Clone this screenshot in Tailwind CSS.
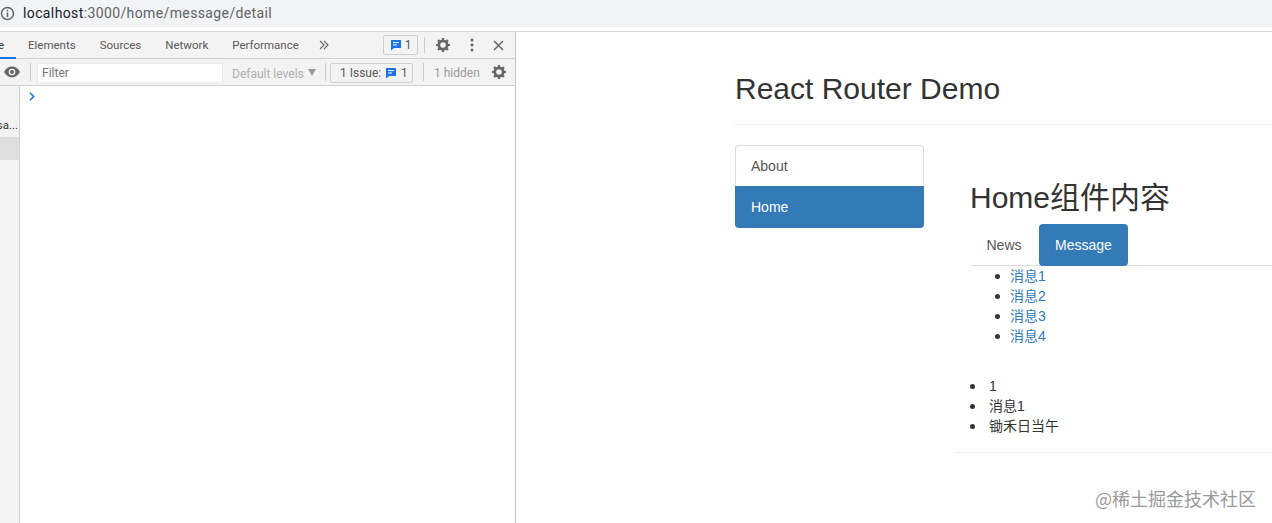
<!DOCTYPE html>
<html lang="en">
<head>
  <meta charset="UTF-8" />
  <title>React Router Demo</title>
  <script src="https://cdn.jsdelivr.net/npm/@tailwindcss/browser@4"></script>
</head>
<body class="bg-white overflow-hidden font-['Liberation_Sans','Noto_Sans_CJK_SC',sans-serif]">
<div class="relative w-[1272px] h-[523px] overflow-hidden flex flex-col">

  <!-- address bar -->
  <div class="h-[27px] shrink-0 bg-[#f1f3f4] flex items-center pl-[0px] gap-[8px] font-['Roboto','Noto_Sans',sans-serif]">
    <svg class="w-[15px] h-[15px]" viewBox="0 0 15 15" fill="none" stroke="#5f6368" stroke-width="1.5"><circle cx="7.500" cy="7.500" r="6"/><path d="M7.500 6.500v4.500M7.500 3.800v1.500"/></svg>
    <span class="text-[14px] tracking-[0.38px] text-[#5f6368]"><span class="text-[#202124]">localhost</span>:3000/home/message/detail</span>
  </div>
  <div class="h-[5px] shrink-0 bg-white border-b border-[#d4d6d9]"></div>

  <div class="flex flex-1 min-h-0">
    <!-- devtools -->
    <div class="w-[516px] shrink-0 border-r border-[#c4c6c9] flex flex-col font-['Roboto','Noto_Sans',sans-serif] text-[11.5px] text-[#5a5a5a]">
      <div class="h-[27px] shrink-0 bg-[#f3f3f3] border-b border-[#d0d0d0] flex items-center relative">
        <div class="absolute left-0 bottom-[-1px] w-[16px] h-[2px] bg-[#1a73e8]"></div>
        <div class="w-[28px] shrink-0 flex pl-[4px] pt-[1px]"><span class="flex justify-end w-0 text-[#333]">e</span></div>
        <div class="flex items-center gap-[24px] pt-[1px]">
          <span>Elements</span><span>Sources</span><span>Network</span><span>Performance</span>
        </div>
        <svg class="ml-[20px] w-[10px] h-[10px]" viewBox="0 0 10 10" fill="none" stroke="#666" stroke-width="1.1"><path d="M1 1l4 4-4 4M5 1l4 4-4 4"/></svg>
        <div class="ml-auto flex items-center pr-[11px]">
          <div class="w-[35px] h-[20px] border border-[#cfcfcf] rounded-[2px] flex items-center justify-center gap-[3px] text-[12px]">
            <svg class="w-[12px] h-[12px]" viewBox="0 0 12 12"><path d="M1 1h10v8H4l-3 2.600z" fill="#1a73e8"/><path d="M3 3.600h6M3 6h4" stroke="#fff" stroke-width="1"/></svg>
            <span>1</span>
          </div>
          <div class="ml-[6px] w-px h-[16px] bg-[#ccc]"></div>
          <svg class="ml-[10px] w-[16px] h-[16px]" viewBox="0 0 16 16"><circle cx="8" cy="8" r="4.200" fill="none" stroke="#666" stroke-width="2.800"/><path d="M8 1v2.400M8 12.600V15M1 8h2.400M12.600 8H15M3 3l1.800 1.800M11.200 11.200L13 13M13 3l-1.800 1.800M4.800 11.200L3 13" stroke="#666" stroke-width="2.200"/></svg>
          <svg class="ml-[19px] w-[4px] h-[14px]" viewBox="0 0 4 14" fill="#666"><circle cx="2" cy="2" r="1.500"/><circle cx="2" cy="7" r="1.500"/><circle cx="2" cy="12" r="1.500"/></svg>
          <svg class="ml-[19px] w-[11px] h-[11px]" viewBox="0 0 11 11" fill="none" stroke="#666" stroke-width="1.500"><path d="M1 1l9 9M10 1l-9 9"/></svg>
        </div>
      </div>
      <div class="h-[27px] shrink-0 bg-[#f3f3f3] border-b border-[#d0d0d0] flex items-center text-[12px]">
        <svg class="ml-[4px] w-[16px] h-[12px]" viewBox="0 0 16 12"><path d="M0 6c2-3.600 5-5.400 8-5.400S14 2.400 16 6c-2 3.600-5 5.400-8 5.400S2 9.600 0 6z" fill="#666"/><circle cx="8" cy="6" r="3.300" fill="#f3f3f3"/><circle cx="8" cy="6" r="2" fill="#666"/></svg>
        <div class="ml-[10px] w-px h-[18px] bg-[#ccc]"></div>
        <div class="ml-[6px] w-[186px] h-[20px] mt-[1px] pt-[1px] bg-white border border-[#ebebeb] flex items-center pl-[4px] text-[#757575]">Filter</div>
        <span class="ml-[9px] w-[72px] pt-[3px] text-[#b0b0b0] whitespace-nowrap">Default levels</span>
        <svg class="ml-[4px] w-[8px] h-[7px]" viewBox="0 0 8 7" fill="#9a9a9a"><path d="M0 0h8L4 7z"/></svg>
        <div class="ml-[9px] w-px h-[18px] bg-[#ccc]"></div>
        <div class="ml-[4px] w-[83px] h-[20px] mt-[1px] border border-[#cfcfcf] rounded-[2px] flex items-center pl-[9px] whitespace-nowrap">
          <span class="w-[45px] pt-[1px] overflow-hidden">1 Issue:</span>
          <svg class="w-[12px] h-[12px]" viewBox="0 0 12 12"><path d="M1 1h10v8H4l-3 2.600z" fill="#1a73e8"/><path d="M3 3.600h6M3 6h4" stroke="#fff" stroke-width="1"/></svg>
          <span class="ml-[4px] pt-[1px]">1</span>
        </div>
        <div class="ml-[10px] w-px h-[18px] bg-[#ccc]"></div>
        <span class="ml-[10px] w-[46px] pt-[2px] text-[#9a9a9a] whitespace-nowrap">1 hidden</span>
        <svg class="ml-[11px] w-[16px] h-[16px]" viewBox="0 0 16 16"><circle cx="8" cy="8" r="4.200" fill="none" stroke="#666" stroke-width="2.800"/><path d="M8 1v2.400M8 12.600V15M1 8h2.400M12.600 8H15M3 3l1.800 1.800M11.200 11.200L13 13M13 3l-1.800 1.800M4.800 11.200L3 13" stroke="#666" stroke-width="2.200"/></svg>
      </div>
      <div class="flex flex-1 min-h-0">
        <div class="w-[20px] shrink-0 bg-[#f3f3f3] border-r border-[#d0d0d0] overflow-hidden">
          <div class="mt-[31px] h-[18px] text-[#333] whitespace-nowrap flex justify-end pr-[1px]">sa...</div>
          <div class="mt-[2px] h-[23px] bg-[#dedede]"></div>
        </div>
        <div class="flex-1 bg-white pl-[9px] pt-[6px]">
          <svg class="w-[6px] h-[9px]" viewBox="0 0 6 9" fill="none" stroke="#1a73e8" stroke-width="1.600"><path d="M1 .8l3.600 3.700L1 8.200"/></svg>
        </div>
      </div>
    </div>

    <!-- page -->
    <div class="flex-1 min-w-0 pl-[219px] text-[14px] text-[#333]">
      <div class="h-[93px] border-b border-[#eee] pt-[40px]">
        <h2 class="text-[30px] leading-[33px] font-normal">React Router Demo</h2>
      </div>
      <div class="flex">
        <div class="w-[189px] shrink-0 mt-[20px] flex flex-col">
          <div class="h-[41px] pl-[15px] flex items-center text-[#555] bg-white border border-[#ddd] border-b-0 rounded-t-[4px]">About</div>
          <div class="h-[42px] pl-[16px] flex items-center text-white bg-[#337ab7] rounded-b-[4px]">Home</div>
        </div>
        <div class="flex-1 min-w-0 ml-[31px]">
          <div class="mt-[56px] h-[43px] pl-[15px]"><h2 class="text-[30px] leading-[33px] font-normal whitespace-nowrap">Home组件内容</h2></div>
          <div class="flex h-[42px] border-b border-[#ddd] ml-[16px]">
            <div class="w-[66px] mr-[2px] h-[41px] pt-[1px] flex items-center justify-center text-[#555]">News</div>
            <div class="w-[89px] h-[42px] shrink-0 rounded-[4px] bg-[#337ab7] text-white flex items-center justify-center">Message</div>
          </div>
          <ul class="pl-[40px] leading-[20px] text-[#337ab7]">
            <li class="flex items-center gap-[10px]"><i class="w-[5px] h-[5px] rounded-full bg-[#333]"></i>消息1</li>
            <li class="flex items-center gap-[10px]"><i class="w-[5px] h-[5px] rounded-full bg-[#333]"></i>消息2</li>
            <li class="flex items-center gap-[10px]"><i class="w-[5px] h-[5px] rounded-full bg-[#333]"></i>消息3</li>
            <li class="flex items-center gap-[10px]"><i class="w-[5px] h-[5px] rounded-full bg-[#333]"></i>消息4</li>
          </ul>
          <ul class="mt-[30px] pl-[15px] leading-[20px]">
            <li class="flex items-center gap-[14px]"><i class="w-[5px] h-[5px] rounded-full bg-[#333]"></i>1</li>
            <li class="flex items-center gap-[14px]"><i class="w-[5px] h-[5px] rounded-full bg-[#333]"></i>消息1</li>
            <li class="flex items-center gap-[14px]"><i class="w-[5px] h-[5px] rounded-full bg-[#333]"></i>锄禾日当午</li>
          </ul>
          <div class="mt-[16px] border-t border-[#eee]"></div>
        </div>
      </div>
    </div>
  </div>

  <div class="absolute right-[16px] bottom-[13px] text-[18px] leading-[24px] text-[#9a9a9a] font-['Noto_Sans_CJK_SC',sans-serif]">@稀土掘金技术社区</div>
</div>
</body>
</html>
